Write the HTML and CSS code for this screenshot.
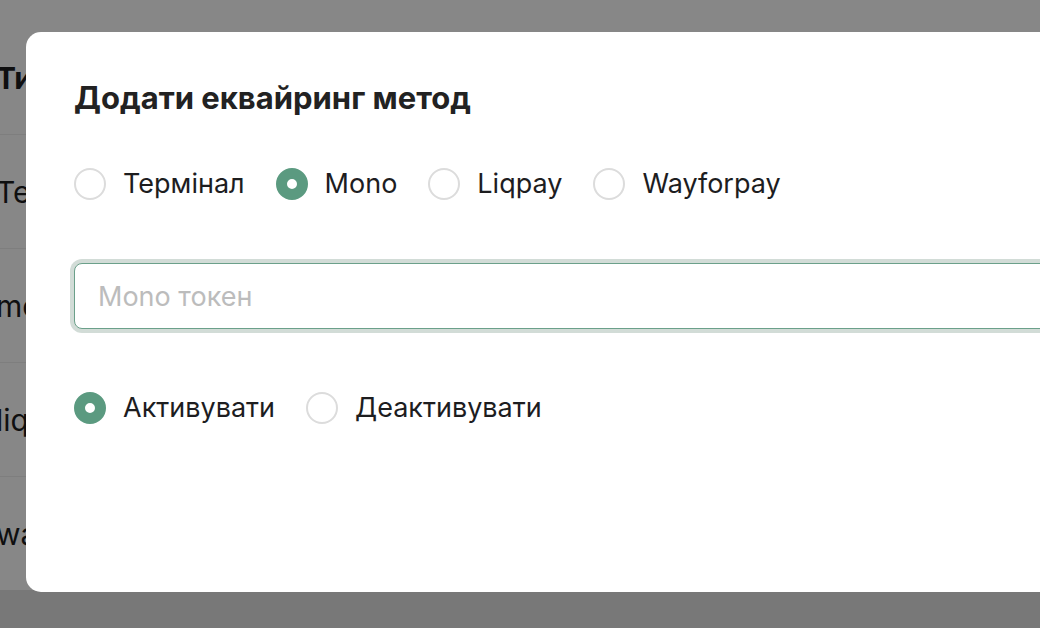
FILE: index.html
```html
<!DOCTYPE html>
<html lang="uk">
<head>
    <meta charset="UTF-8" />
    <meta name="viewport" content="width=device-width, initial-scale=1.0"/>
    <title>Еквайринг</title>
    <link rel="stylesheet" href="styles.css">
</head>
<body>
    <main class="page">
        <table class="methods-table">
            <thead>
                <tr><th>Тип</th></tr>
            </thead>
            <tbody>
                <tr><td>Термінал</td></tr>
                <tr><td>mono</td></tr>
                <tr><td>liqpay</td></tr>
                <tr><td>wayforpay</td></tr>
            </tbody>
        </table>
    </main>

    <div class="overlay">
        <div class="modal">
            <h2 class="modal-title">Додати еквайринг метод</h2>

            <div class="radio-row">
                <label class="radio"><input type="radio" name="method" value="terminal"><span>Термінал</span></label>
                <label class="radio"><input type="radio" name="method" value="mono" checked><span>Mono</span></label>
                <label class="radio"><input type="radio" name="method" value="liqpay"><span>Liqpay</span></label>
                <label class="radio"><input type="radio" name="method" value="wayforpay"><span>Wayforpay</span></label>
            </div>

            <input class="token-input" type="text" placeholder="Mono токен">

            <div class="radio-row">
                <label class="radio"><input type="radio" name="active" value="on" checked><span>Активувати</span></label>
                <label class="radio"><input type="radio" name="active" value="off"><span>Деактивувати</span></label>
            </div>
        </div>
    </div>
</body>
</html>
```

FILE: styles.css
```css
:root {
    --accent: #5b9a80;
    --accent-border: #6ba08a;
    --ring: #d2dcd7;
    --text: #1d1d1f;
    --radio-border: #dcdcdc;
    --placeholder: #bcbcbc;
}
body {
    margin: 0;
    font-family: Inter, "Noto Sans", sans-serif;
    color: var(--text);
    background: #e2e2e2;
    overflow: hidden;
}
.page {
    height: 590px;
    background: #fff;
    padding-top: 21px;
    box-sizing: border-box;
}
.methods-table {
    border-collapse: collapse;
    margin-left: -4px;
    width: 400px;
}
.methods-table th,
.methods-table td {
    text-align: left;
    height: 113px;
    padding: 0;
    font-size: 30px;
    border-bottom: 1px solid #efefef;
}
.methods-table th { font-weight: 700; }

.overlay {
    position: fixed;
    inset: 0;
    background: rgba(0, 0, 0, 0.47);
    padding: 32px 0 0 26px;
    overflow: hidden;
}
.modal {
    width: 1100px;
    height: 560px;
    box-sizing: border-box;
    background: #fff;
    border-radius: 15px;
    padding: 48px 48px;
    display: flex;
    flex-direction: column;
}
.modal-title {
    margin: 0;
    font-size: 31px;
    line-height: 36px;
    font-weight: 700;
    color: #222;
}
.radio-row {
    display: flex;
    gap: 31px;
    margin-top: 52px;
}
.token-input + .radio-row { margin-top: 63px; }
.radio {
    display: flex;
    align-items: center;
    gap: 17px;
    font-size: 27px;
    line-height: 32px;
}
.radio input {
    appearance: none;
    margin: 0;
    width: 32px;
    height: 32px;
    border-radius: 50%;
    border: 2px solid var(--radio-border);
    background: #fff;
    box-sizing: border-box;
}
.radio input:checked {
    border: 11px solid var(--accent);
}
.token-input {
    margin-top: 63px;
    height: 66px;
    width: 1100px;
    box-sizing: border-box;
    border: 1.5px solid var(--accent-border);
    border-radius: 8px;
    box-shadow: 0 0 0 4px var(--ring);
    padding: 0 23px;
    font-family: inherit;
    font-size: 27px;
    color: var(--text);
    outline: none;
}
.token-input::placeholder { color: var(--placeholder); }
```
